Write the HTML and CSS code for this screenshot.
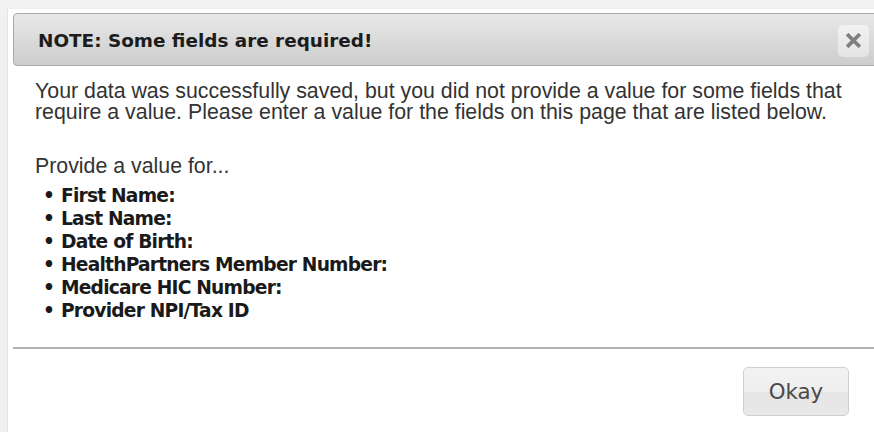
FILE: index.html
```html
<!DOCTYPE html>
<html lang="en">
<head>
<meta charset="utf-8">
<title>Required fields</title>
<link rel="stylesheet" href="styles.css">
</head>
<body>
<div class="dialog">
  <div class="titlebar">
    <span class="title">NOTE: Some fields are required!</span>
    <button class="close" type="button" aria-label="Close">
      <svg width="15" height="15" viewBox="0 0 15 15" aria-hidden="true">
        <path d="M2.5 2.5 L12.5 12.5 M12.5 2.5 L2.5 12.5" stroke="#808080" stroke-width="3.8" stroke-linecap="square"/>
      </svg>
    </button>
  </div>
  <div class="content">
    <p class="message">Your data was successfully saved, but you did not provide a value for some fields that require a value. Please enter a value for the fields on this page that are listed below.</p>
    <p class="lead">Provide a value for...</p>
    <ul class="fields">
      <li>First Name:</li>
      <li>Last Name:</li>
      <li>Date of Birth:</li>
      <li>HealthPartners Member Number:</li>
      <li>Medicare HIC Number:</li>
      <li>Provider NPI/Tax ID</li>
    </ul>
  </div>
  <div class="footer">
    <button class="okay" type="button">Okay</button>
  </div>
</div>
</body>
</html>
```
FILE: styles.css
```css
html, body {
  margin: 0;
  padding: 0;
  height: 100%;
  overflow: hidden;
}

body {
  background: #f1f1f1;
  padding: 9px 0 0 8px;
  box-sizing: border-box;
}

.dialog {
  width: 880px;
  height: 440px;
  background: #fff;
  padding: 4px 0 0 5px;
  box-sizing: border-box;
  box-shadow: -1px 0 1px rgba(0, 0, 0, 0.05);
}

.titlebar {
  height: 53px;
  box-sizing: border-box;
  border: 1px solid #a9a9a9;
  border-radius: 4px;
  background: linear-gradient(#e8e8e8, #cdcdcd);
  display: flex;
  align-items: center;
  justify-content: space-between;
  padding: 2px 18px 0 24px;
}

.title {
  font-family: "DejaVu Sans", Verdana, sans-serif;
  font-weight: bold;
  font-size: 18.4px;
  color: #1c1c1c;
}

.close {
  width: 31px;
  height: 32px;
  border: none;
  border-radius: 5px;
  background: linear-gradient(#f1f1f1, #e5e5e5);
  display: flex;
  align-items: center;
  justify-content: center;
  padding: 0;
  margin-top: 0;
}

.content {
  padding: 15px 20px 0 22px;
  font-family: "Liberation Sans", Arial, sans-serif;
  color: #333;
}

.message {
  margin: 0;
  font-size: 21.33px;
  line-height: 21px;
  width: 820px;
}

.lead {
  margin: 33px 0 0;
  font-size: 21.33px;
  line-height: 21px;
}

.fields {
  list-style: none;
  margin: 7px 0 0;
  padding: 0 0 0 8px;
  font-family: "DejaVu Sans", Verdana, sans-serif;
  font-weight: bold;
  font-size: 18.67px;
  letter-spacing: -0.8px;
  line-height: 23px;
  color: #1a1a1a;
}

.fields li::before {
  content: "\2022";
  display: inline-block;
  width: 18px;
  letter-spacing: 0;
}

.footer {
  margin-top: 25px;
  border-top: 2px solid #b3b3b3;
  padding: 18px 39px 0 0;
  display: flex;
  justify-content: flex-end;
}

.okay {
  width: 106px;
  height: 49px;
  border: 1px solid #cfcfcf;
  border-radius: 5px;
  background: linear-gradient(#f2f2f2 0%, #eeeeee 50%, #e5e5e5 51%, #e9e9e9 100%);
  font-family: "DejaVu Sans", Verdana, sans-serif;
  font-size: 21.33px;
  color: #4a4a4a;
  padding: 0;
}
```
